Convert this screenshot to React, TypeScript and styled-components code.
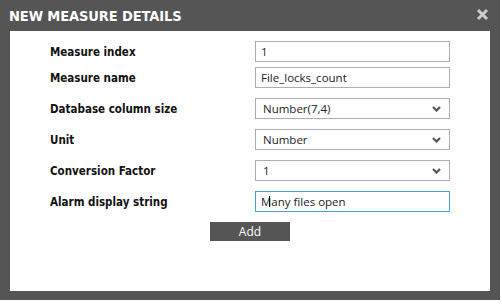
import * as React from 'react';
import styled, { createGlobalStyle } from 'styled-components';

const GlobalStyle = createGlobalStyle`
  body {
    margin: 0;
    background: #fff;
  }
`;

const Dialog = styled.div`
  width: 500px;
  height: 300px;
  background: #555;
  display: flex;
  flex-direction: column;
  padding: 0 10px 9px 10px;
  box-sizing: border-box;
`;

const TitleBar = styled.div`
  height: 31px;
  display: flex;
  align-items: center;
  justify-content: space-between;
  margin-left: -1px;
`;

const Title = styled.div`
  color: #fff;
  font-family: 'DejaVu Sans Condensed', 'DejaVu Sans', sans-serif;
  font-weight: bold;
  font-size: 14.5px;
  letter-spacing: -0.1px;
`;

const CloseIcon = styled.svg`
  display: block;
  margin-right: 1px;
  margin-top: -2px;
`;

const Body = styled.div`
  flex: 1;
  background: #fff;
  padding: 10px 0 0 40px;
`;

const Form = styled.div`
  display: flex;
  flex-direction: column;
`;

const Row = styled.div<{ $gap: number }>`
  display: grid;
  grid-template-columns: 205px 195px;
  align-items: center;
  margin-top: ${(p) => p.$gap}px;
`;

const Label = styled.label`
  font-family: 'DejaVu Sans Condensed', 'DejaVu Sans', sans-serif;
  font-weight: bold;
  font-size: 11.5px;
  color: #111;
`;

const FieldWrap = styled.div`
  position: relative;
  height: 21px;
`;

const Field = styled.div<{ $focused?: boolean }>`
  height: 21px;
  box-sizing: border-box;
  border: 1px solid ${(p) => (p.$focused ? '#3fa2d8' : '#a9aeb6')};
  background: #fff;
  display: flex;
  align-items: center;
  justify-content: space-between;
  padding: 0 8px 0 5px;
  font-family: 'Open Sans', sans-serif;
  font-size: 11.5px;
  color: #222;
`;

const SelectText = styled.span`
  padding-left: 2px;
`;

const Caret = styled.span`
  position: absolute;
  left: 14px;
  top: 5px;
  width: 1px;
  height: 11px;
  background: #000;
`;

const ButtonRow = styled.div`
  display: flex;
  margin-top: 10px;
  padding-left: 160px;
`;

const AddButton = styled.button`
  width: 80px;
  height: 19px;
  border: none;
  background: #555;
  color: #fff;
  font-family: 'Open Sans', sans-serif;
  font-size: 12px;
  padding: 0;
`;

const Chevron = () => (
  <svg width="9" height="6" viewBox="0 0 9 6">
    <path d="M1 1 L4.5 4.5 L8 1" fill="none" stroke="#555" strokeWidth="2.2" />
  </svg>
);

const fields = [
  { label: 'Measure index', value: '1', select: false, gap: 0 },
  { label: 'Measure name', value: 'File_locks_count', select: false, gap: 5 },
  { label: 'Database column size', value: 'Number(7,4)', select: true, gap: 10 },
  { label: 'Unit', value: 'Number', select: true, gap: 10 },
  { label: 'Conversion Factor', value: '1', select: true, gap: 10 },
  { label: 'Alarm display string', value: 'Many files open', select: false, gap: 10, focused: true },
];

export default function App() {
  return (
    <>
      <GlobalStyle />
      <Dialog>
        <TitleBar>
          <Title>NEW MEASURE DETAILS</Title>
          <CloseIcon width="13" height="13" viewBox="0 0 13 13">
            <path d="M2 2 L11 11 M11 2 L2 11" stroke="#cccccc" strokeWidth="3" />
          </CloseIcon>
        </TitleBar>
        <Body>
          <Form>
            {fields.map((f) => (
              <Row key={f.label} $gap={f.gap}>
                <Label>{f.label}</Label>
                <FieldWrap>
                  <Field $focused={f.focused}>
                    {f.select ? <SelectText>{f.value}</SelectText> : <span>{f.value}</span>}
                    {f.select && <Chevron />}
                  </Field>
                  {f.focused && <Caret />}
                </FieldWrap>
              </Row>
            ))}
            <ButtonRow>
              <AddButton>Add</AddButton>
            </ButtonRow>
          </Form>
        </Body>
      </Dialog>
    </>
  );
}
